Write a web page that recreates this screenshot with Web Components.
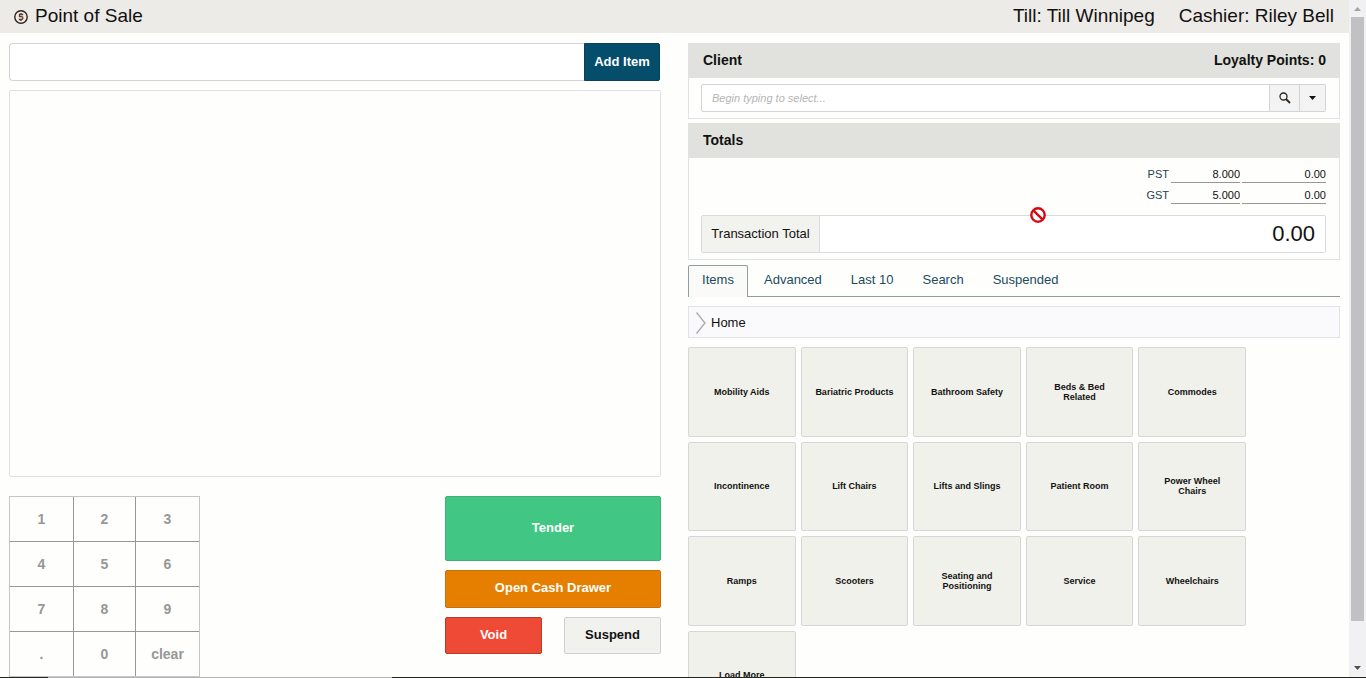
<!DOCTYPE html>
<html lang="en">
<head>
<meta charset="utf-8">
<meta name="viewport" content="width=device-width, initial-scale=1">
<title>Point of Sale</title>
<style>
  html, body { margin: 0; height: 100%; }
  body {
    overflow: hidden;
    background: #fefefd;
    color: #111;
    font: 13px/16px "Liberation Sans", Arial, sans-serif;
    --line: #d9dadd;
    --heading: #e1e2dd;
    --tile: #f1f1ec;
    --link: #1b4b5e;
  }
</style>
</head>
<body>
<pos-app></pos-app>
<script>
const base = `<style>
  *, *::before, *::after { box-sizing: border-box; }
  :host { display: block; box-sizing: border-box; }
  :host([hidden]) { display: none; }
  button, input { font: inherit; color: inherit; margin: 0; }
  button { cursor: pointer; }
  svg { display: block; }
</style>`;

function define(name, html, setup) {
  const template = document.createElement('template');
  template.innerHTML = base + html;
  customElements.define(name, class extends HTMLElement {
    constructor() {
      super();
      this.attachShadow({ mode: 'open' }).append(template.content.cloneNode(true));
    }
    connectedCallback() {
      if (setup && !this.ready) { this.ready = true; setup(this, this.shadowRoot); }
    }
  });
}

/* Title bar */
define('pos-header', `<style>
  :host { background: #edebe7; height: 33px; padding: 0 15px 0 14px; font-size: 19px; line-height: 32px; }
  header { display: flex; align-items: center; }
  h1 { display: flex; align-items: center; gap: 7px; margin: 0 auto 0 0; font: inherit; }
  h1 svg { margin-top: 2px; }
  .info { display: flex; gap: 24px; }
</style>
<header>
  <h1><svg width="14" height="14" viewBox="0 0 14 14" fill="none" stroke="#2e251c" aria-hidden="true">
    <circle cx="7" cy="7" r="6.200" stroke-width="1.400"/>
    <path d="M9.200 4.500H5.500V6.600H7.500Q8.900 6.600 8.900 8T7.500 9.500H4.800M7 3V4.500M7 9.500V11" stroke-width="1.300" stroke="#5c3b20"/>
  </svg>Point of Sale</h1>
  <div class="info"><span>Till: Till Winnipeg</span><span>Cashier: Riley Bell</span></div>
</header>`);

/* Item entry */
define('pos-entry', `<style>
  form { display: flex; height: 38px; margin-right: 1px; }
  input { flex: 1; min-width: 0; border: 1px solid #d3d4d7; border-right: 0; border-radius: 4px 0 0 4px; background: #fff; padding: 0 10px; outline: 0; }
  button { width: 76px; border: 1px solid #0b4058; border-radius: 0 2px 2px 0; background: #044d6b; color: #fff; font-weight: bold; padding: 0; }
</style>
<form onsubmit="return false"><input type="text" aria-label="Item"><button>Add Item</button></form>`);

define('pos-list', `<style>
  :host { height: 387px; border: 1px solid #e0e1e5; border-radius: 2px; background: #fefefd; }
</style><slot></slot>`);

/* Number pad */
define('pos-keypad', `<style>
  :host { width: 191px; }
  div { display: grid; grid-template-columns: 63px 1fr 63px; grid-auto-rows: 44px; gap: 1px; background: #979797; border: 1px solid #c6c6c6; }
  button { border: 0; background: #fefefd; color: #979797; font-size: 14px; font-weight: bold; padding: 0; }
</style><div></div>`, (host, root) => {
  for (const key of ['1', '2', '3', '4', '5', '6', '7', '8', '9', '.', '0', 'clear']) {
    const b = document.createElement('button');
    b.type = 'button';
    b.textContent = key;
    root.querySelector('div').append(b);
  }
});

/* Action button; the tone attribute picks its colours */
define('pos-button', `<style>
  :host { height: 37px; }
  button { width: 100%; height: 100%; border: 1px solid #cfd0d3; border-radius: 2px; background: #f1f1ee; font-weight: bold; padding: 0 0 2px; }
  :host([tone]) button { color: #fff; }
  :host([tone=tender]) { height: 65px; }
  :host([tone=tender]) button { background: #42c684; border-color: #3cb178; }
  :host([tone=drawer]) { height: 38px; }
  :host([tone=drawer]) button { background: #e67e00; border-color: #c87010; }
  :host([tone=void]) button { background: #ef4a36; border-color: #b93a2a; }
</style><button type="button"><slot></slot></button>`);

define('pos-actions', `<style>
  :host { display: grid; grid-template-columns: 1fr 1fr; gap: 9px 22px; width: 216px; }
  .wide { grid-column: span 2; }
</style>
<pos-button class="wide" tone="tender">Tender</pos-button>
<pos-button class="wide" tone="drawer">Open Cash Drawer</pos-button>
<pos-button tone="void">Void</pos-button>
<pos-button>Suspend</pos-button>`);

/* Panel with a heading bar */
define('pos-panel', `<style>
  :host { border: 1px solid #e1e2e6; border-top: 0; position: relative; }
  header { display: flex; justify-content: space-between; height: 35px; margin: 0 -1px; padding: 0 14px 0 15px; background: var(--heading); font-size: 14px; font-weight: bold; line-height: 34px; }
  h2 { margin: 0; font: inherit; }
  .body { padding: 6px 13px 6px 12px; }
</style>
<header><h2><slot name="title"></slot></h2><slot name="side"></slot></header>
<div class="body"><slot></slot></div>`);

define('pos-client', `<style>
  div { display: flex; height: 28px; }
  input { flex: 1; min-width: 0; border: 1px solid #d3d4d8; border-radius: 2px 0 0 2px; background: #fff; padding: 0 10px; font-size: 11px; outline: 0; }
  input::placeholder { color: #b5b5b5; font-style: italic; opacity: 1; }
  button { display: grid; place-items: center; width: 30px; border: 1px solid #d3d4d8; border-left: 0; background: #f3f3f3; padding: 0; }
  button:last-child { width: 26px; border-radius: 0 2px 2px 0; }
</style>
<div>
  <input type="text" aria-label="Client" placeholder="Begin typing to select...">
  <button type="button" aria-label="Search"><svg width="12" height="12" viewBox="0 0 12 12" fill="none" stroke="#2b2320">
    <circle cx="4.500" cy="4.500" r="3.500" stroke-width="1.300"/><path d="M7 7L11 11" stroke-width="1.800"/></svg></button>
  <button type="button" aria-label="Open list"><svg width="7" height="4" viewBox="0 0 7 4"><path d="M0 0H7L3.500 4Z" fill="#111"/></svg></button>
</div>`);

/* Taxes and transaction total */
define('pos-totals', `<style>
  .taxes { display: grid; grid-template-columns: auto 69px 84px; justify-content: end; gap: 0 2px; font-size: 11px; }
  .taxes label { line-height: 21px; color: #24424e; text-align: right; }
  .taxes input { width: 100%; height: 19px; border: 0; border-bottom: 1px solid #979797; background: none; padding: 2px 0 0; text-align: right; outline: 0; }
  .total { display: flex; height: 38px; margin-top: 9px; border: 1px solid var(--line); border-radius: 2px; }
  .total label { flex: none; width: 118px; border-right: 1px solid var(--line); background: #f2f2ef; line-height: 35px; text-align: center; white-space: nowrap; }
  .total input { flex: 1; min-width: 0; border: 0; background: #fff; padding: 0 10px; font-size: 22px; text-align: right; outline: 0; }
</style>
<div class="taxes">
  <label for="pst">PST</label><input id="pst" value="8.000" readonly><input aria-label="PST amount" value="0.00" readonly>
  <label for="gst">GST</label><input id="gst" value="5.000" readonly><input aria-label="GST amount" value="0.00" readonly>
</div>
<div class="total"><label for="total">Transaction Total</label><input id="total" value="0.00" readonly></div>`);

/* Pointer shown over a disabled field */
define('pos-pointer', `<style>
  :host { position: absolute; left: calc(50% + 16px); top: 84px; }
</style>
<svg width="16" height="16" viewBox="0 0 16 16" fill="none" stroke="#d40a12" stroke-width="2.400" aria-hidden="true">
  <circle cx="8" cy="8" r="6.700" fill="#fff"/><path d="M3.300 3.300L12.700 12.700"/></svg>`);

define('pos-tabs', `<style>
  nav { display: flex; gap: 1px; height: 32px; border-bottom: 1px solid #8f9da2; }
  a { height: 31px; padding: 0 14px; color: var(--link); line-height: 30px; text-decoration: none; }
  a.on { height: 32px; width: 60px; margin-right: 1px; padding: 0; text-align: center; border: 1px solid #8f9da2; border-bottom: 0; border-radius: 2px 2px 0 0; background: #fafaf8; line-height: 28px; }
</style>
<nav><a class="on" href="#items" aria-current="page">Items</a><a href="#advanced">Advanced</a><a href="#last">Last 10</a><a href="#search">Search</a><a href="#suspended">Suspended</a></nav>`);

define('pos-crumbs', `<style>
  nav { display: flex; align-items: center; gap: 5px; height: 32px; padding: 1px 7px 0; border: 1px solid #e1e2e8; background: #fafafc; }
  a { color: #111; text-decoration: none; }
</style>
<nav><svg width="10" height="22" viewBox="0 0 10 22" fill="none" stroke="#a9a9ab" stroke-width="1.300" aria-hidden="true"><path d="M.500 .500L9 11L.500 21.500"/></svg><a href="#home">Home</a></nav>`);

define('pos-tile', `<style>
  button { width: 100%; height: 100%; border: 1px solid #d5d6d8; border-radius: 2px; background: var(--tile); padding: 0 12px; font-size: 9px; line-height: 10px; font-weight: bold; }
  span { display: block; max-width: 80px; margin: auto; }
  :host([wrap]) span { max-width: 64px; }
</style><button type="button"><span><slot></slot></span></button>`);

define('pos-catalog', `<style>
  :host { display: grid; grid-template: repeat(4, 1fr) / repeat(5, 1fr); gap: 5px; max-width: 558px; height: 373px; }
</style>`, (host, root) => {
  const names = ['Mobility Aids', 'Bariatric Products', 'Bathroom Safety', 'Beds & Bed Related', 'Commodes',
    'Incontinence', 'Lift Chairs', 'Lifts and Slings', 'Patient Room', 'Power Wheel Chairs',
    'Ramps', 'Scooters', 'Seating and Positioning', 'Service', 'Wheelchairs', 'Load More'];
  const wrapped = new Set(['Beds & Bed Related', 'Power Wheel Chairs', 'Seating and Positioning']);
  for (const name of names) {
    const tile = document.createElement('pos-tile');
    tile.toggleAttribute('wrap', wrapped.has(name));
    tile.textContent = name;
    root.append(tile);
  }
});

define('pos-scrollbar', `<style>
  :host { display: flex; flex-direction: column; width: 17px; padding: 0 2px; background: #f1f1f4; }
  svg { flex: none; margin: 7px auto 6px; }
  .track { flex: 1; }
  .thumb { height: 93%; background: #c1c1c3; }
  .down { margin: 0 auto 7px; }
</style>
<svg width="7" height="4" viewBox="0 0 7 4"><path d="M0 4H7L3.500 0Z" fill="#a3a3a3"/></svg>
<div class="track"><div class="thumb"></div></div>
<svg class="down" width="7" height="4" viewBox="0 0 7 4"><path d="M0 0H7L3.500 4Z" fill="#505046"/></svg>`);

define('pos-app', `<style>
  :host { display: grid; grid-template: minmax(0, 1fr) 1px / minmax(0, 1fr) 17px; height: 100vh; overflow: hidden; }
  .page { overflow: hidden; }
  main { display: grid; grid-template-columns: 1fr 1fr; gap: 27px; padding: 10px 9px 0; }
  .sale { display: flex; flex-direction: column; gap: 9px; }
  .controls { display: flex; justify-content: space-between; align-items: start; margin-top: 10px; }
  .side { display: flex; flex-direction: column; }
  pos-panel { margin-bottom: 4px; }
  pos-tabs { margin: 1px 0 9px; }
  pos-crumbs { margin-bottom: 9px; }
  .edge { grid-column: 1 / -1; display: flex; background: #24251c; }
  .edge::before { content: ""; width: 344px; margin-left: 48px; background: #b4b4b4; }
</style>
<div class="page">
  <pos-header></pos-header>
  <main>
    <section class="sale" aria-label="Sale">
      <pos-entry></pos-entry>
      <pos-list></pos-list>
      <div class="controls"><pos-keypad></pos-keypad><pos-actions></pos-actions></div>
    </section>
    <section class="side" aria-label="Transaction">
      <pos-panel><span slot="title">Client</span><span slot="side">Loyalty Points: 0</span><pos-client></pos-client></pos-panel>
      <pos-panel><span slot="title">Totals</span><pos-totals></pos-totals><pos-pointer></pos-pointer></pos-panel>
      <pos-tabs></pos-tabs>
      <pos-crumbs></pos-crumbs>
      <pos-catalog></pos-catalog>
    </section>
  </main>
</div>
<pos-scrollbar></pos-scrollbar>
<div class="edge"></div>`);
</script>
</body>
</html>
